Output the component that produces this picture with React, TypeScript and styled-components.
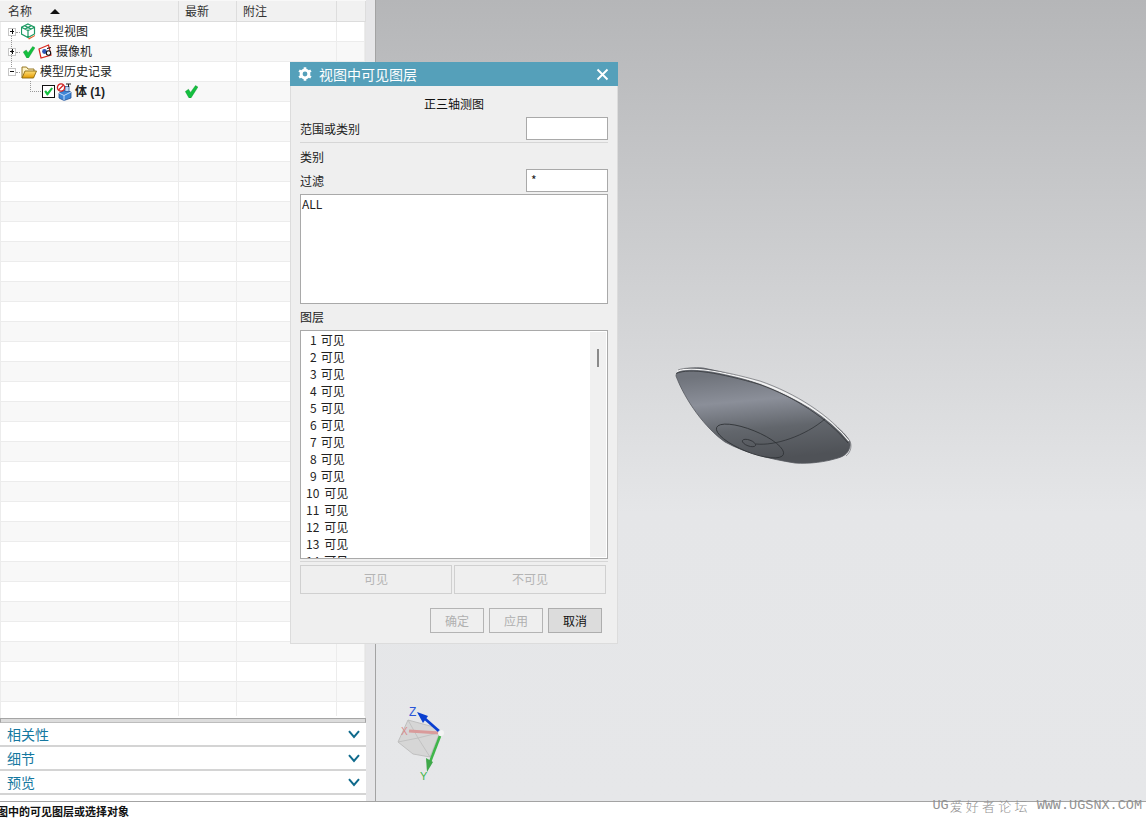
import React from "react";
import styled, { createGlobalStyle } from "styled-components";

const Global = createGlobalStyle`
  html, body { margin: 0; padding: 0; background: #fff; }
  body { font-family: "Noto Sans CJK SC", "Noto Sans", sans-serif; font-size: 12px; color: #222; }
  * { box-sizing: border-box; }
`;

const Page = styled.div`
  position: relative;
  width: 1146px;
  height: 818px;
  overflow: hidden;
  display: flex;
  flex-direction: column;
`;
const Main = styled.div`
  height: 802px;
  display: flex;
  border-bottom: 1px solid #a3a3a3;
`;
const LeftPanel = styled.div`
  width: 366px;
  display: flex;
  flex-direction: column;
  background: #fff;
  padding-bottom: 6px;
`;
const Gutter = styled.div`
  width: 10px;
  background: #e6e6e8;
  border-right: 1px solid #a3a3a3;
`;
const Viewport = styled.div`
  position: relative;
  flex: 1;
  background: linear-gradient(180deg, #b5b6b8 0%, #e5e6e8 64%, #e6e7e9 100%);
`;
const HeaderRow = styled.div`
  height: 22px;
  display: grid;
  grid-template-columns: 179px 58px 100px 29px;
  background: #f1f1f1;
  border-bottom: 1px solid #dcdcdc;
  border-top: 1px solid #f8f8f8;
`;
const HeaderCell = styled.div`
  display: flex;
  align-items: center;
  padding: 0 0 2px 6px;
  gap: 18px;
  border-right: 1px solid #dddddd;
  color: #333;
  &:first-child { padding-left: 8px; }
`;
const SortArrow = styled.span`
  width: 0;
  height: 0;
  margin-top: 2px;
  border-left: 5px solid transparent;
  border-right: 5px solid transparent;
  border-bottom: 5px solid #111;
`;
const Table = styled.div`
  position: relative;
  flex: 1;
  min-height: 0;
  overflow: hidden;
  padding-bottom: 2px;
  border-left: 1px solid #ececec;
  border-right: 1px solid #e4e4e4;
`;
const RowsClip = styled.div`
  height: 100%;
  overflow: hidden;
`;
const Row = styled.div<{ $alt: boolean }>`
  height: 20px;
  display: grid;
  grid-template-columns: 178px 58px 100px 28px;
  background: ${(p) => (p.$alt ? "#f8f8f8" : "#fff")};
  border-bottom: 1px solid #ececec;
`;
const Cell = styled.div<{ $indent?: number }>`
  display: flex;
  align-items: center;
  gap: 3px;
  padding-left: ${(p) => p.$indent ?? 0}px;
  border-right: 1px solid #ececec;
  white-space: nowrap;
`;
const NodeLabel = styled.span<{ $bold?: boolean }>`
  margin-top: -2px;
  font-weight: ${(p) => (p.$bold ? 700 : 400)};
  color: #222;
  font-family: ${(p) => (p.$bold ? '"Liberation Sans", "Noto Sans CJK SC", sans-serif' : "inherit")};
`;
const Expander = styled.span`
  position: relative;
  width: 8px;
  height: 8px;
  margin-right: 2px;
  border: 1px solid #c6c6c6;
  background: #fff;
  flex: none;
  &::before {
    content: "";
    position: absolute;
    left: 1px;
    top: 2px;
    width: 4px;
    height: 1px;
    background: #111;
  }
  &::after {
    content: "";
    position: absolute;
    left: 7px;
    top: 3px;
    width: 4px;
    border-top: 1px dotted #999;
  }
`;
const Plus = styled.i`
  position: absolute;
  left: 2.5px;
  top: 0.5px;
  width: 1px;
  height: 5px;
  background: #111;
`;
const VLine = styled.span`
  position: absolute;
  left: 10px;
  top: 14px;
  height: 31px;
  border-left: 1px dotted #999;
`;
const ElbowLine = styled.span`
  position: absolute;
  left: 29px;
  top: 59px;
  width: 11px;
  height: 11px;
  border-left: 1px dotted #999;
  border-bottom: 1px dotted #999;
`;
const Resizer = styled.div`
  height: 5px;
  background: #dcdcdc;
  border: 1px solid #a5a5a5;
  border-bottom-color: #bdbdbd;
`;
const Section = styled.div`
  height: 24px;
  display: flex;
  align-items: center;
  justify-content: space-between;
  padding: 0 6px 0 7px;
  border-bottom: 2px solid #d4d4d4;
  color: #1578a0;
  font-size: 14px;
`;
const StatusBar = styled.div`
  height: 16px;
  font-size: 11px;
  font-weight: 700;
  line-height: 18px;
  margin-left: -3px;
  color: #111;
  white-space: nowrap;
`;
const Watermark = styled.div`
  position: absolute;
  right: 4px;
  top: 796px;
  display: flex;
  align-items: center;
  color: #919191;
  white-space: nowrap;
`;
const WmCn = styled.span`
  margin: 0 6px 0 1px;
  font-size: 13px;
  font-weight: 300;
  letter-spacing: 3.2px;
`;
const WmEn = styled.span`
  font-size: 13.5px;
  font-family: "Liberation Mono", monospace;
`;
const Dialog = styled.div`
  position: absolute;
  left: 290px;
  top: 62px;
  width: 328px;
  height: 582px;
  background: #efefef;
  border: 1px solid #dcdcdc;
  border-top: 0;
  display: flex;
  flex-direction: column;
`;
const TitleBar = styled.div`
  height: 24px;
  margin: 0 -1px;
  background: #55a0ba;
  display: flex;
  align-items: center;
  padding: 0 9px 0 8px;
  gap: 7px;
  color: #fff;
  font-size: 14px;
`;
const TitleText = styled.span`
  flex: 1;
`;
const DialogBody = styled.div`
  padding: 0 9px;
  display: flex;
  flex-direction: column;
`;
const ViewName = styled.div`
  height: 31px;
  padding-top: 7px;
  padding-bottom: 4px;
  display: flex;
  align-items: center;
  justify-content: center;
  color: #111;
`;
const FieldRow = styled.div<{ $top?: number }>`
  height: 23px;
  margin-top: ${(p) => p.$top ?? 0}px;
  display: flex;
  align-items: center;
  justify-content: space-between;
`;
const FieldBox = styled.div`
  width: 82px;
  height: 23px;
  background: #fff;
  border: 1px solid #a9a9a9;
  padding: 0 4px;
  line-height: 19px;
  color: #222;
`;
const Separator = styled.div<{ $top: number }>`
  height: 1px;
  margin-top: ${(p) => p.$top}px;
  background: #d6d6d6;
`;
const Caption = styled.div<{ $top: number }>`
  height: 20px;
  padding-bottom: 2px;
  display: flex;
  align-items: center;
  margin-top: ${(p) => p.$top}px;
  color: #222;
`;
const CategoryList = styled.div`
  height: 110px;
  margin-top: 2px;
  background: #fff;
  border: 1px solid #a9a9a9;
  padding: 0 1px;
  line-height: 17px;
  color: #222;
`;
const LayerList = styled.div`
  position: relative;
  height: 229px;
  margin-top: 3px;
  background: #fff;
  border: 1px solid #a9a9a9;
  overflow: hidden;
`;
const LayerRow = styled.div<{ $wide: boolean }>`
  height: 17px;
  line-height: 17px;
  padding-left: ${(p) => (p.$wide ? 5 : 9)}px;
  display: flex;
  gap: ${(p) => (p.$wide ? 5 : 4)}px;
  color: #222;
`;
const Scrollbar = styled.div`
  position: absolute;
  top: 1px;
  right: 1px;
  bottom: 1px;
  width: 16px;
  background: #f0f0f0;
`;
const Thumb = styled.div`
  position: absolute;
  left: 7px;
  top: 17px;
  width: 2px;
  height: 18px;
  background: #8a8a8a;
`;
const PairRow = styled.div`
  display: flex;
  gap: 2px;
  margin-top: 3px;
`;
const WideButton = styled.div`
  width: 152px;
  height: 29px;
  padding-bottom: 2px;
  border: 1px solid #d0d0d0;
  display: flex;
  align-items: center;
  justify-content: center;
  color: #b4b4b4;
`;
const Footer = styled.div`
  display: flex;
  justify-content: flex-end;
  gap: 5px;
  margin-top: 14px;
  padding-right: 6px;
`;
const FootButton = styled.div<{ $active?: boolean }>`
  width: 54px;
  height: 25px;
  padding-bottom: 1px;
  display: flex;
  align-items: center;
  justify-content: center;
  border: 1px solid ${(p) => (p.$active ? "#adadad" : "#b4b4b4")};
  background: ${(p) => (p.$active ? "#dcdcdc" : "transparent")};
  color: ${(p) => (p.$active ? "#111" : "#b0b0b0")};
`;
const SaucerSvg = styled.svg`
  position: absolute;
  left: 294px;
  top: 360px;
`;
const TriadSvg = styled.svg`
  position: absolute;
  left: 14px;
  top: 695px;
`;
const CheckSvg = styled.svg<{ $shift?: number }>`
  flex: none;
  margin-left: ${(p) => p.$shift ?? 0}px;
`;
const BodySvg = styled.svg`
  flex: none;
  margin-left: -2px;
`;
const IconSvg = styled.svg`
  flex: none;
`;

const Check = ({ size = 13, shift = 0 }: { size?: number; shift?: number }) => (
  <CheckSvg $shift={shift} width={size} height={size} viewBox="0 0 13 13">
    <path d="M0.3 6.5 L3.5 4.3 L5.5 7.4 L10.5 0.6 L12.9 2 L6 12.9 L4 12.9 Z" fill="#14c03f" stroke="#0a8a2c" strokeWidth="0.4" />
  </CheckSvg>
);
const CubeIcon = () => (
  <IconSvg width="16" height="17" viewBox="1 0 16 17">
    <path d="M8 1 L14.5 4.2 L14.5 11 L8 14.5 L1.5 11 L1.5 4.2 Z M1.5 4.2 L8 7.6 L14.5 4.2 M8 7.6 L8 14.5 M4.5 2.6 L11 6 M11.5 2.6 L5 6" fill="none" stroke="#1d9a63" strokeWidth="1.2" />
    <path d="M8 15.5 L15 12 L15 13 L9 16.5 Z" fill="#e8622a" />
  </IconSvg>
);
const CameraIcon = () => (
  <IconSvg width="15" height="15" viewBox="0 0 15 15">
    <path d="M1 5 L10.5 1 L13 11 L3 14 Z" fill="#fff" stroke="#d9281e" strokeWidth="1.2" />
    <circle cx="6.5" cy="7.5" r="2.4" fill="#2f56b8" />
    <circle cx="10.5" cy="9" r="2.2" fill="#fff" stroke="#111" strokeWidth="1.1" />
    <path d="M9 4.5 L13 3.5" stroke="#111" strokeWidth="1" />
  </IconSvg>
);
const FolderIcon = () => (
  <IconSvg width="16" height="14" viewBox="0 0 16 14">
    <defs>
      <linearGradient id="fold" x1="0" y1="0" x2="0" y2="1">
        <stop offset="0" stopColor="#ffe07a" />
        <stop offset="1" stopColor="#e39a00" />
      </linearGradient>
    </defs>
    <path d="M1 13 L1 2 L5.5 2 L7 4 L13 4 L13 6" fill="#fff3c4" stroke="#8a6a10" strokeWidth="0.9" />
    <path d="M1 13 L4 6 L15.5 6 L12.5 13 Z" fill="url(#fold)" stroke="#8a6a10" strokeWidth="0.9" />
  </IconSvg>
);
const CheckBoxIcon = () => (
  <IconSvg width="13" height="13" viewBox="0 0 13 13">
    <rect x="0.5" y="0.5" width="12" height="12" fill="#fff" stroke="#111" />
    <path d="M2.3 6.5 L4 5.2 L5.5 7.2 L9.4 2.6 L11 3.6 L5.9 10.6 L4.9 10.6 Z" fill="#14c03f" />
  </IconSvg>
);
const BodyIcon = () => (
  <BodySvg width="16" height="18" viewBox="0 0 16 18">
    <path d="M3 10 L9 7 L15 9 L15 15 L8 17.5 L3 15 Z" fill="#3f86d6" stroke="#1f4f95" strokeWidth="0.8" />
    <path d="M3 10 L8 12.5 L15 9 M8 12.5 L8 17.5" fill="none" stroke="#d5e7fb" strokeWidth="0.9" />
    <rect x="9" y="3.5" width="4" height="5" fill="#bcd7f5" stroke="#1f4f95" strokeWidth="0.7" />
    <path d="M10 1 L15 1 M12.5 1 L12.5 4" stroke="#222" strokeWidth="1" />
    <circle cx="5" cy="4.5" r="3.6" fill="#fff" stroke="#d02020" strokeWidth="1.3" />
    <path d="M2.5 7 L7.5 2" stroke="#d02020" strokeWidth="1.3" />
  </BodySvg>
);
const Gear = () => (
  <IconSvg width="14" height="14" viewBox="0 0 14 14">
    <circle cx="7" cy="7" r="3.9" fill="none" stroke="#fff" strokeWidth="3" />
    <path d="M7 0.2 L7 2.4 M7 11.6 L7 13.8 M1.1 3.6 L3 4.7 M11 9.3 L12.9 10.4 M1.1 10.4 L3 9.3 M11 4.7 L12.9 3.6" stroke="#fff" strokeWidth="2.6" />
  </IconSvg>
);
const CloseX = () => (
  <IconSvg width="13" height="13" viewBox="0 0 13 13">
    <path d="M1.5 1.5 L11.5 11.5 M11.5 1.5 L1.5 11.5" stroke="#fff" strokeWidth="1.9" />
  </IconSvg>
);
const Chevron = () => (
  <IconSvg width="12" height="9" viewBox="0 0 12 9">
    <path d="M1 1.2 L6 7 L11 1.2" fill="none" stroke="#0f6a8c" strokeWidth="2" />
  </IconSvg>
);

const Saucer = () => (
  <SaucerSvg width="185" height="110" viewBox="670 360 185 110" overflow="visible">
    <defs>
      <linearGradient id="dish" x1="0.4" y1="0.05" x2="0.55" y2="0.95">
        <stop offset="0" stopColor="#70747c" />
        <stop offset="0.32" stopColor="#8b8f99" />
        <stop offset="0.65" stopColor="#62666c" />
        <stop offset="1" stopColor="#4f5257" />
      </linearGradient>
    </defs>
    <path d="M676 376 C676 371 684 367 703 368 C745 376 800 398 830 422 C845 433 851 440 850 446 C849 452 845 456 838 458 C825 462 810 464 795 463 C770 459 745 453 725 442 C705 428 685 400 676 376 Z" fill="url(#dish)" stroke="#55585e" strokeWidth="0.8" />
    <path d="M677 371.5 C690 365.5 720 371 760 382.5 C795 395 830 417 849 441" fill="none" stroke="#f6f6f6" strokeWidth="1.3" />
    <path d="M676 373.5 C690 367.5 720 373 760 384.5 C795 397 828 419 848 443" fill="none" stroke="#33363a" strokeWidth="0.8" />
    <path d="M678 370 C690 365 720 370 760 381 C795 393 830 415 850 441 C852 446 851 452 846 456" fill="none" stroke="#5a5d62" strokeWidth="0.6" />
    <ellipse cx="750" cy="441" rx="36" ry="11" transform="rotate(22 750 441)" fill="none" stroke="#2f3236" strokeWidth="0.8" />
    <ellipse cx="749" cy="443" rx="7" ry="3" transform="rotate(20 749 443)" fill="none" stroke="#2f3236" strokeWidth="0.8" />
    <path d="M756 444 C775 446 805 436 825 419" fill="none" stroke="#2f3236" strokeWidth="0.8" />
  </SaucerSvg>
);
const Triad = () => (
  <TriadSvg width="75" height="95" viewBox="390 695 75 95" fill="none">
    <path d="M408 720 L434 727 L440 732 L430 757 L413 754 L398 742 Z" fill="#d6d6d6" stroke="#bcbcbc" strokeWidth="0.9" />
    <path d="M408 720 L418 738 L398 742 M418 738 L430 757 M418 738 L438 733" stroke="#bdbdbd" strokeWidth="0.8" />
    <path d="M409 731 L440 733" stroke="#d99b9b" strokeWidth="3" />
    <text x="401" y="735" fontSize="10" fill="#d98a8a" fontFamily="Liberation Sans, sans-serif">X</text>
    <path d="M440 732 L423 717" stroke="#0a3fd0" strokeWidth="2.8" />
    <path d="M417 712 L428 716 L423 723 Z" fill="#0a3fd0" />
    <text x="409" y="716" fontSize="12" fill="#2a55d8" fontFamily="Liberation Sans, sans-serif">Z</text>
    <path d="M440 736 L430 762" stroke="#3fb54a" strokeWidth="2.6" />
    <path d="M426 758 L433 762 L427 772 Z" fill="#3fa84a" />
    <text x="420" y="780" fontSize="11" fill="#3fb54a" fontFamily="Liberation Sans, sans-serif">Y</text>
    <circle cx="441" cy="733" r="3" fill="#f4f4f4" />
  </TriadSvg>
);

const totalRows = 36;
const layers = [1, 2, 3, 4, 5, 6, 7, 8, 9, 10, 11, 12, 13, 14];

export default function App() {
  const contents: Record<number, React.ReactNode> = {
    0: (
      <Cell $indent={7}>
        <Expander><Plus /></Expander>
        <CubeIcon />
        <NodeLabel>模型视图</NodeLabel>
      </Cell>
    ),
    1: (
      <Cell $indent={7}>
        <Expander><Plus /></Expander>
        <Check size={12} shift={2} />
        <CameraIcon />
        <NodeLabel>摄像机</NodeLabel>
      </Cell>
    ),
    2: (
      <Cell $indent={7}>
        <Expander />
        <FolderIcon />
        <NodeLabel>模型历史记录</NodeLabel>
      </Cell>
    ),
    3: (
      <Cell $indent={41}>
        <CheckBoxIcon />
        <BodyIcon />
        <NodeLabel $bold>体 (1)</NodeLabel>
      </Cell>
    ),
  };
  return (
    <Page>
      <Global />
      <Main>
        <LeftPanel>
          <HeaderRow>
            <HeaderCell>名称<SortArrow /></HeaderCell>
            <HeaderCell>最新</HeaderCell>
            <HeaderCell>附注</HeaderCell>
            <HeaderCell />
          </HeaderRow>
          <Table>
            <RowsClip>
              {Array.from({ length: totalRows }, (_, i) => (
                <Row key={i} $alt={i % 2 === 1}>
                  {contents[i] ?? <Cell />}
                  <Cell $indent={6}>{i === 3 ? <Check /> : null}</Cell>
                  <Cell />
                  <Cell />
                </Row>
              ))}
            </RowsClip>
            <VLine />
            <ElbowLine />
          </Table>
          <Resizer />
          <Section>相关性<Chevron /></Section>
          <Section>细节<Chevron /></Section>
          <Section>预览<Chevron /></Section>
        </LeftPanel>
        <Gutter />
        <Viewport>
          <Saucer />
          <Triad />
        </Viewport>
      </Main>
      <StatusBar>图中的可见图层或选择对象</StatusBar>
      <Watermark>
        <WmEn>UG</WmEn>
        <WmCn>爱好者论坛</WmCn>
        <WmEn>WWW.UGSNX.COM</WmEn>
      </Watermark>
      <Dialog>
        <TitleBar>
          <Gear />
          <TitleText>视图中可见图层</TitleText>
          <CloseX />
        </TitleBar>
        <DialogBody>
          <ViewName>正三轴测图</ViewName>
          <FieldRow>
            <span>范围或类别</span>
            <FieldBox />
          </FieldRow>
          <Separator $top={2} />
          <Caption $top={4}>类别</Caption>
          <FieldRow $top={2}>
            <span>过滤</span>
            <FieldBox>*</FieldBox>
          </FieldRow>
          <CategoryList>ALL</CategoryList>
          <Caption $top={3}>图层</Caption>
          <LayerList>
            {layers.map((n) => (
              <LayerRow key={n} $wide={n > 9}>
                <span>{n}</span>
                <span>可见</span>
              </LayerRow>
            ))}
            <Scrollbar><Thumb /></Scrollbar>
          </LayerList>
          <Separator $top={2} />
          <PairRow>
            <WideButton>可见</WideButton>
            <WideButton>不可见</WideButton>
          </PairRow>
          <Footer>
            <FootButton>确定</FootButton>
            <FootButton>应用</FootButton>
            <FootButton $active>取消</FootButton>
          </Footer>
        </DialogBody>
      </Dialog>
    </Page>
  );
}
